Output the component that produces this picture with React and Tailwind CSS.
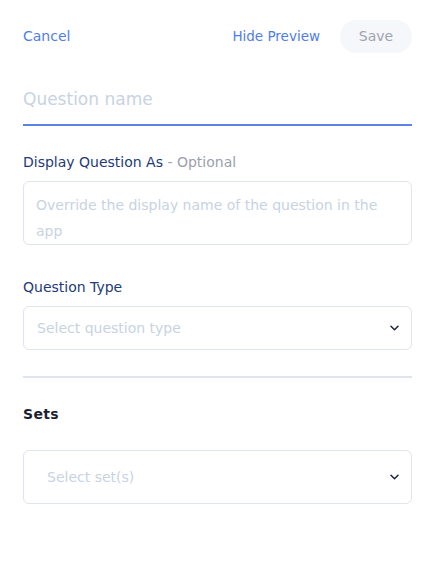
import React from 'react';

const Chevron = () => (
  <svg width="9" height="6" viewBox="0 0 9 6" fill="none" className="shrink-0">
    <path d="M1 1.2l3.5 3.5L8 1.2" stroke="#1e2440" strokeWidth="1.5" strokeLinecap="round" strokeLinejoin="round" />
  </svg>
);

const App = () => {
  return (
    <div className="min-h-[562px] bg-white pl-[23px] pr-[34px] pt-[20px] font-['DejaVu_Sans',sans-serif]">
      {/* Header */}
      <div className="flex items-center justify-between h-[33px]">
        <button className="text-[14px] text-[#4f7ee8]">Cancel</button>
        <div className="flex items-center gap-[20px]">
          <button className="text-[13.5px] text-[#4f7ee8]">Hide Preview</button>
          <button className="h-[33px] w-[72px] rounded-full bg-[#f6f7fb] text-[14px] text-[#a0a4ae]">Save</button>
        </div>
      </div>

      {/* Question name */}
      <div className="mt-[25px] pt-[9px] pb-[13px]">
        <div className="text-[17px] leading-[24px] text-[#c8d3e2]">Question name</div>
      </div>
      <div className="h-[2px] bg-[#5b84e6]" />

      {/* Display question as */}
      <div className="mt-[26px] text-[14px] leading-[20px]">
        <span className="font-medium text-[#233a78]">Display Question As</span>
        <span className="text-[#9ca0ab]"> - Optional</span>
      </div>
      <div className="mt-[9px] h-[64px] rounded-[6px] border border-[#dfe4ee] px-[12px] pt-[10px] overflow-hidden">
        <div className="text-[14px] leading-[26px] text-[#c8d3e2]">Override the display name of the question in the app</div>
      </div>

      {/* Question type */}
      <div className="mt-[32px] text-[14px] leading-[20px] font-medium text-[#233a78]">Question Type</div>
      <div className="mt-[9px] flex h-[44px] items-center justify-between rounded-[6px] border border-[#dfe4ee] pl-[13px] pr-[12px]">
        <span className="text-[14px] text-[#c8d3e2]">Select question type</span>
        <Chevron />
      </div>

      <div className="mt-[26px] h-[2px] bg-[#dfe4ee]" />

      {/* Sets */}
      <div className="mt-[26px] text-[14px] leading-[20px] font-bold tracking-[0.3px] text-[#1c1f33]">Sets</div>
      <div className="mt-[26px] flex h-[54px] items-center justify-between rounded-[6px] border border-[#dfe4ee] pl-[23px] pr-[12px]">
        <span className="text-[14px] text-[#c8d3e2]">Select set(s)</span>
        <Chevron />
      </div>
    </div>
  );
};

export default App;
